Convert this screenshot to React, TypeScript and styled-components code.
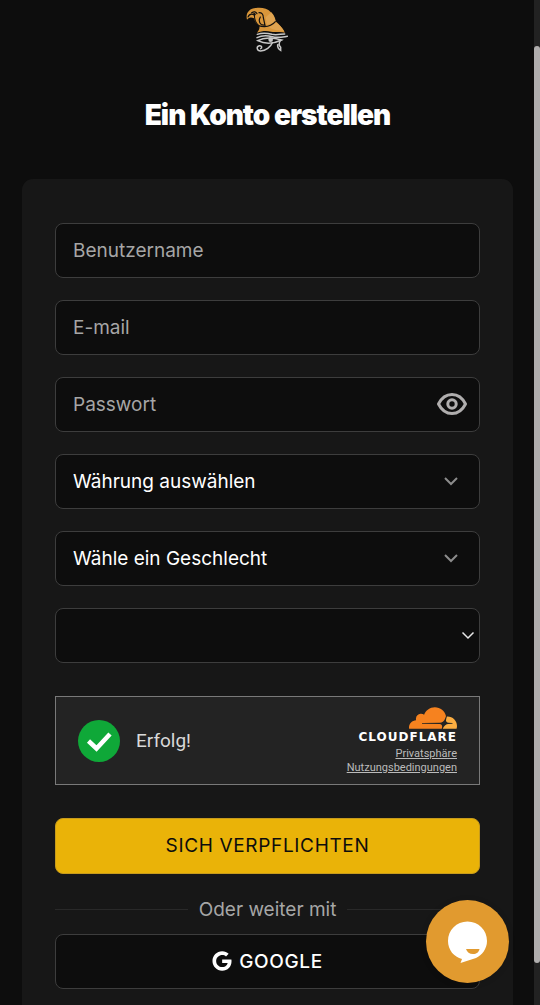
import React from "react";
import styled, { createGlobalStyle } from "styled-components";
import { FaGoogle } from "react-icons/fa";

const GlobalStyle = createGlobalStyle`
  * { box-sizing: border-box; }
  body { margin: 0; background: #0d0d0d; color: #fff; font-family: Inter, "Liberation Sans", sans-serif; }
  button, input, select { font: inherit; }
`;

const Page = styled.div`
  min-height: 100vh;
  display: flex;
  flex-direction: column;
  padding: 4px 27px 0 22px;
`;

const Header = styled.header`
  display: flex;
  flex-direction: column;
  align-items: center;
  gap: 39px;
  margin-bottom: 44px;
`;

const Logo = styled.svg`
  display: block;
  width: 50px;
  height: 52px;
`;

const Title = styled.h1`
  margin: 0;
  font-size: 28px;
  line-height: 40px;
  font-weight: 900;
  letter-spacing: -0.035em;
`;

const Card = styled.form`
  flex: 1;
  display: flex;
  flex-direction: column;
  padding: 44px 33px 16px;
  border-radius: 11px 11px 0 0;
  background: #171717;
`;

const Fields = styled.div`
  display: flex;
  flex-direction: column;
  gap: 22px;
  margin-bottom: 33px;
`;

const Field = styled.div`
  position: relative;
  display: flex;
  height: 55px;
`;

const controlStyle = `
  flex: 1;
  min-width: 0;
  padding: 0 17px;
  border: 1px solid #3d3d3d;
  border-radius: 8px;
  background: #0d0d0d;
  color: #fff;
  font-size: 19px;
  outline: none;
`;

const TextInput = styled.input`
  ${controlStyle}
  &::placeholder { color: #a6a6a6; opacity: 1; }
`;

const Select = styled.select`
  ${controlStyle}
  appearance: none;
`;

const Chevron = styled.svg<{ $edge?: boolean }>`
  position: absolute;
  top: 19px;
  right: ${(p) => (p.$edge ? 4 : 21)}px;
  width: 16px;
  height: 16px;
  color: ${(p) => (p.$edge ? "#e8e8e8" : "#8c8c8c")};
  pointer-events: none;
`;

const EyeButton = styled.button`
  position: absolute;
  top: 11px;
  right: 12px;
  display: flex;
  padding: 0;
  border: 0;
  background: none;
  color: #b0aeae;
`;

const Captcha = styled.section`
  display: flex;
  align-items: center;
  height: 89px;
  margin-bottom: 33px;
  padding: 0 22px;
  border: 1px solid #797979;
  background: #232323;
  font-family: Roboto, "Liberation Sans", sans-serif;
`;

const CaptchaStatus = styled.p`
  flex: 1;
  margin: 0 0 0 16px;
  font-size: 19px;
  line-height: 24px;
  color: #d9d9d9;
`;

const Brand = styled.div`
  display: flex;
  flex-direction: column;
  align-items: flex-end;
`;

const Wordmark = styled.span`
  margin-bottom: 3px;
  font-family: "DejaVu Sans", sans-serif;
  font-size: 12px;
  line-height: 14px;
  font-weight: 700;
  letter-spacing: 1px;
  color: #fff;
`;

const BrandLink = styled.a`
  font-size: 11px;
  line-height: 14px;
  color: #bbb;
`;

const SubmitButton = styled.button`
  height: 56px;
  padding: 0 0 2px;
  border: 1px solid #c79b1c;
  border-radius: 8px;
  background: #eab308;
  color: #0d0d0d;
  font-size: 19px;
  letter-spacing: 0.035em;
`;

const Divider = styled.div`
  display: flex;
  align-items: center;
  gap: 11px;
  height: 24px;
  margin: 23px 0 13px;
  color: #a6a6a6;
  font-size: 19px;

  &::before,
  &::after {
    content: "";
    flex: 1;
    height: 1px;
    background: #292929;
  }
`;

const GoogleButton = styled.button`
  display: flex;
  align-items: center;
  justify-content: center;
  gap: 7px;
  height: 55px;
  padding: 0 0 1px;
  border: 1px solid #3d3d3d;
  border-radius: 8px;
  background: #0d0d0d;
  color: #fff;
  font-size: 19px;
  font-weight: 500;
  letter-spacing: 0.035em;
`;

const ChatButton = styled.button`
  position: fixed;
  right: 31px;
  bottom: 22px;
  width: 83px;
  height: 83px;
  padding: 0;
  border: 0;
  border-radius: 50%;
  background: #e19a2f;
  box-shadow: 0 1px 6px rgba(0, 0, 0, 0.15);
`;

const ScrollTrack = styled.div`
  position: fixed;
  top: 0;
  right: 0;
  bottom: 0;
  width: 6px;
  padding: 46px 0 42px;
  background: #222;
`;

const ScrollThumb = styled.div`
  height: 100%;
  border-radius: 3px;
  background: #b0aeae;
`;

function FalconLogo() {
  return (
    <Logo viewBox="0 0 150 156" aria-label="Logo" role="img">
      <path fill="#d9963a" d="M12 47C7 28 18 13 39 12c18-2 34 1 44 12 9 9 13 19 14 27 11 9 22 21 29 35-14-5-28 0-42-3-14-4-28-2-42 3 6-7 9-14 7-22-9-4-14-12-16-21-9-4-15-3-21 4Z" />
      <path fill="#e0a450" d="m68 40 17-15c7 8 11 16 13 26-7 7-16 10-27 11Z" />
      <path fill="#e0a450" d="m78 70 22-14c9 7 18 15 23 25-15-2-28 0-45-11Z" />
      <g fill="none" stroke="#111" strokeWidth="3.5" strokeLinecap="round">
        <path d="M15 39c3-7 8-10 15-8M26 26c7-4 13-3 16 3" />
        <path d="M34 33c0 12 4 23 12 31M48 26c10 0 13 7 13 15l5 23-11-2c-7-6-8-14-3-23" />
        <path d="M46 65c18 5 38 3 51-12" />
      </g>
      <circle cx="34" cy="31" r="4" fill="#111" />
      <g fill="none" stroke="#c7c7c7" strokeWidth="4.5" strokeLinecap="round">
        <path d="M43 91c16-6 30-4 44 0 14 3 26-1 38-1" />
        <path d="M42 101c16-8 30-7 46-3 15 4 29 1 45-1" />
        <path d="M44 110c19-10 47-9 72-2-23 11-49 13-72 2Z" />
        <path d="M88 116c-5 13-20 25-35 25-12 0-14-14-4-16 8-1 9 7 4 9" />
        <path d="M112 110c-6 9-5 14 1 20v9c-7-4-10-9-9-17" />
      </g>
      <circle cx="83" cy="107" r="7" fill="#c7c7c7" />
    </Logo>
  );
}

function EyeIcon() {
  return (
    <svg width="32" height="32" viewBox="0 0 32 32" fill="none" stroke="currentColor" strokeWidth="3" aria-hidden="true">
      <path strokeLinejoin="round" d="M2.5 16C5.5 10 10 6.5 16 6.5S26.500 10 29.500 16C26.500 22 22 25.500 16 25.500S5.500 22 2.500 16Z" />
      <circle cx="16" cy="16" r="4.2" />
    </svg>
  );
}

function ChevronIcon({ edge }: { edge?: boolean }) {
  return (
    <Chevron $edge={edge} viewBox="0 0 16 16" fill="none" stroke="currentColor" strokeWidth={edge ? 1.5 : 2} aria-hidden="true">
      <path d={edge ? "M2.5 5.5 8 11l5.5-5.500" : "M2 5l6 6 6-6"} />
    </Chevron>
  );
}

function CloudIcon() {
  return (
    <svg width="48" height="24" viewBox="0 6 24 12" aria-hidden="true">
      <path fill="#f6821f" d="M16.5088 16.8447c.1475-.5068.0908-.9707-.1553-1.3154-.2246-.3164-.6045-.499-1.0615-.5205l-8.6592-.1123a.1559.1559 0 0 1-.1333-.0713c-.0283-.042-.0351-.0986-.021-.1553.0278-.084.1123-.1484.2036-.1562l8.7359-.1123c1.0351-.0489 2.1601-.8868 2.5537-1.9136l.499-1.3013c.0215-.0561.0293-.1128.0147-.168-.5625-2.5463-2.835-4.4453-5.5499-4.4453-2.5039 0-4.6284 1.6177-5.3876 3.8614-.4927-.3658-1.1187-.5625-1.794-.499-1.2026.119-2.1665 1.083-2.2861 2.2856-.0283.31-.0069.6128.0635.894C1.5683 13.171 0 14.7754 0 16.752c0 .1748.0142.3515.0352.5273.0141.083.0844.1475.1689.1475h15.9814c.0909 0 .1758-.0645.2032-.1553l.12-.4268z" />
      <path fill="#fbad41" d="M19.2656 11.2813c-.0771 0-.1611 0-.2383.0112-.0566 0-.1054.0415-.127.0976l-.3378 1.1744c-.1475.5068-.0918.9707.1543 1.3164.2256.3164.6055.498 1.0625.5195l1.8437.1133c.0557 0 .1055.0263.1329.0703.0283.043.0351.1074.0214.1562-.0283.084-.1132.1485-.204.1553l-1.921.1123c-1.041.0488-2.1582.8867-2.5527 1.914l-.1406.3585c-.0283.0713.0215.1416.0986.1416h6.5977c.0771 0 .1474-.0489.169-.126.1122-.4082.1757-.837.1757-1.2803 0-2.6025-2.125-4.727-4.7344-4.727" />
    </svg>
  );
}

export default function App() {
  return (
    <>
      <GlobalStyle />
      <Page>
        <Header>
          <FalconLogo />
          <Title>Ein Konto erstellen</Title>
        </Header>
        <Card onSubmit={(e: React.FormEvent) => e.preventDefault()}>
          <Fields>
            <Field>
              <TextInput id="username" placeholder="Benutzername" aria-label="Benutzername" />
            </Field>
            <Field>
              <TextInput id="email" type="email" placeholder="E-mail" aria-label="E-mail" />
            </Field>
            <Field>
              <TextInput id="password" type="password" placeholder="Passwort" aria-label="Passwort" />
              <EyeButton type="button" aria-label="Passwort anzeigen">
                <EyeIcon />
              </EyeButton>
            </Field>
            <Field>
              <Select aria-label="Währung auswählen">
                <option>Währung auswählen</option>
              </Select>
              <ChevronIcon />
            </Field>
            <Field>
              <Select aria-label="Wähle ein Geschlecht">
                <option>Wähle ein Geschlecht</option>
              </Select>
              <ChevronIcon />
            </Field>
            <Field>
              <Select aria-label="Land">
                <option value="" aria-label="Land" />
              </Select>
              <ChevronIcon edge />
            </Field>
          </Fields>
          <Captcha>
            <svg width="42" height="42" viewBox="0 0 42 42" aria-hidden="true">
              <circle cx="21" cy="21" r="21" fill="#0fa838" />
              <path d="m10.5 21 8 7.5 13.5-14.5" fill="none" stroke="#fff" strokeWidth="4.5" />
            </svg>
            <CaptchaStatus>Erfolg!</CaptchaStatus>
            <Brand>
              <CloudIcon />
              <Wordmark>CLOUDFLARE</Wordmark>
              <BrandLink href="#privacy">Privatsphäre</BrandLink>
              <BrandLink href="#terms">Nutzungsbedingungen</BrandLink>
            </Brand>
          </Captcha>
          <SubmitButton type="submit">SICH VERPFLICHTEN</SubmitButton>
          <Divider>Oder weiter mit</Divider>
          <GoogleButton type="button">
            <FaGoogle size={20} aria-hidden="true" />
            GOOGLE
          </GoogleButton>
        </Card>
      </Page>
      <ChatButton type="button" aria-label="Chat">
        <svg width="83" height="83" viewBox="0 0 83 83" aria-hidden="true">
          <path fill="#fff" d="M41.5 21.5c11 0 19.5 8.5 19.5 19.5 0 8-5 14-11 17l-15.5 5 1.5-4C28 57 22 50 22 41c0-11 8.5-19.5 19.5-19.5Z" />
          <path fill="#e19a2f" d="M40 49h13.5c-.5 3-3 5-6.5 5s-6-2-7-5Z" />
        </svg>
      </ChatButton>
      <ScrollTrack aria-hidden="true">
        <ScrollThumb />
      </ScrollTrack>
    </>
  );
}
